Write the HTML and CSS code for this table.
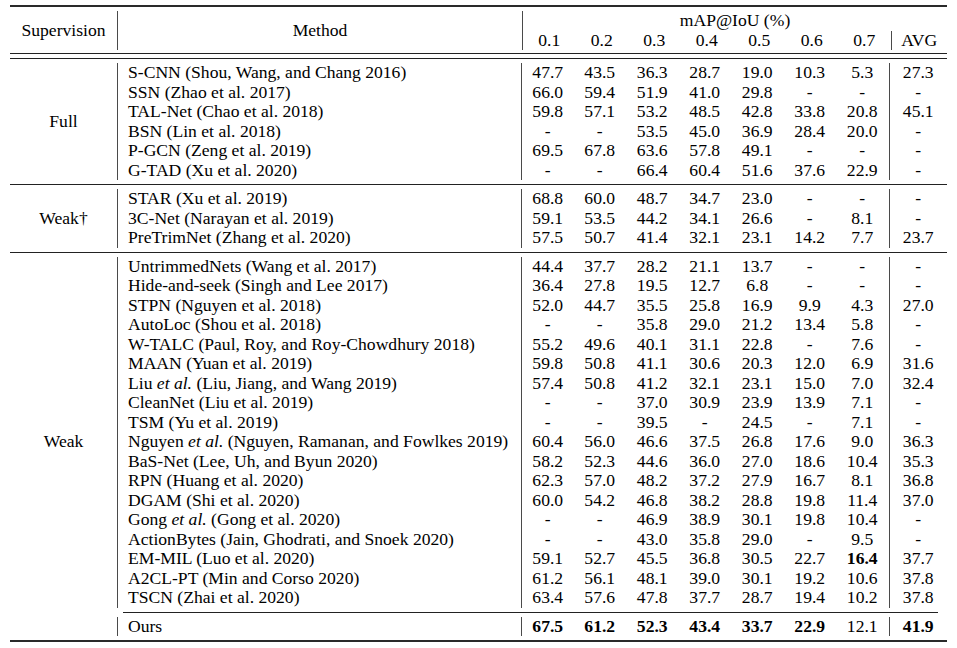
FILE: index.html
```html
<!DOCTYPE html>
<html>
<head>
<meta charset="utf-8">
<link rel="stylesheet" href="styles.css">
</head>
<body>
<div class="tbl">
  <div class="rule thick"></div>
  <div class="block head">
    <div class="sup">Supervision</div>
    <div class="hmethod">Method</div>
    <div class="hmap">
      <div class="htitle">mAP@IoU (%)</div>
      <div class="row hrow">
        <div class="n first">0.1</div><div class="n">0.2</div><div class="n">0.3</div><div class="n">0.4</div><div class="n">0.5</div><div class="n">0.6</div><div class="n">0.7</div><div class="avg">AVG</div>
      </div>
    </div>
  </div>
  <div class="rule"></div>
  <div class="gap4"></div>
  <div class="rule"></div>

  <div class="block">
    <div class="sup">Full</div>
    <div class="rows">
      <div class="row"><div class="m">S-CNN (Shou, Wang, and Chang 2016)</div><div class="n first">47.7</div><div class="n">43.5</div><div class="n">36.3</div><div class="n">28.7</div><div class="n">19.0</div><div class="n">10.3</div><div class="n">5.3</div><div class="avg">27.3</div></div>
      <div class="row"><div class="m">SSN (Zhao et al. 2017)</div><div class="n first">66.0</div><div class="n">59.4</div><div class="n">51.9</div><div class="n">41.0</div><div class="n">29.8</div><div class="n">-</div><div class="n">-</div><div class="avg">-</div></div>
      <div class="row"><div class="m">TAL-Net (Chao et al. 2018)</div><div class="n first">59.8</div><div class="n">57.1</div><div class="n">53.2</div><div class="n">48.5</div><div class="n">42.8</div><div class="n">33.8</div><div class="n">20.8</div><div class="avg">45.1</div></div>
      <div class="row"><div class="m">BSN (Lin et al. 2018)</div><div class="n first">-</div><div class="n">-</div><div class="n">53.5</div><div class="n">45.0</div><div class="n">36.9</div><div class="n">28.4</div><div class="n">20.0</div><div class="avg">-</div></div>
      <div class="row"><div class="m">P-GCN (Zeng et al. 2019)</div><div class="n first">69.5</div><div class="n">67.8</div><div class="n">63.6</div><div class="n">57.8</div><div class="n">49.1</div><div class="n">-</div><div class="n">-</div><div class="avg">-</div></div>
      <div class="row"><div class="m">G-TAD (Xu et al. 2020)</div><div class="n first">-</div><div class="n">-</div><div class="n">66.4</div><div class="n">60.4</div><div class="n">51.6</div><div class="n">37.6</div><div class="n">22.9</div><div class="avg">-</div></div>
    </div>
  </div>
  <div class="rule"></div>

  <div class="block">
    <div class="sup">Weak†</div>
    <div class="rows">
      <div class="row"><div class="m">STAR (Xu et al. 2019)</div><div class="n first">68.8</div><div class="n">60.0</div><div class="n">48.7</div><div class="n">34.7</div><div class="n">23.0</div><div class="n">-</div><div class="n">-</div><div class="avg">-</div></div>
      <div class="row"><div class="m">3C-Net (Narayan et al. 2019)</div><div class="n first">59.1</div><div class="n">53.5</div><div class="n">44.2</div><div class="n">34.1</div><div class="n">26.6</div><div class="n">-</div><div class="n">8.1</div><div class="avg">-</div></div>
      <div class="row"><div class="m">PreTrimNet (Zhang et al. 2020)</div><div class="n first">57.5</div><div class="n">50.7</div><div class="n">41.4</div><div class="n">32.1</div><div class="n">23.1</div><div class="n">14.2</div><div class="n">7.7</div><div class="avg">23.7</div></div>
    </div>
  </div>
  <div class="rule"></div>

  <div class="block">
    <div class="sup low">Weak</div>
    <div class="rows">
      <div class="row"><div class="m">UntrimmedNets (Wang et al. 2017)</div><div class="n first">44.4</div><div class="n">37.7</div><div class="n">28.2</div><div class="n">21.1</div><div class="n">13.7</div><div class="n">-</div><div class="n">-</div><div class="avg">-</div></div>
      <div class="row"><div class="m">Hide-and-seek (Singh and Lee 2017)</div><div class="n first">36.4</div><div class="n">27.8</div><div class="n">19.5</div><div class="n">12.7</div><div class="n">6.8</div><div class="n">-</div><div class="n">-</div><div class="avg">-</div></div>
      <div class="row"><div class="m">STPN (Nguyen et al. 2018)</div><div class="n first">52.0</div><div class="n">44.7</div><div class="n">35.5</div><div class="n">25.8</div><div class="n">16.9</div><div class="n">9.9</div><div class="n">4.3</div><div class="avg">27.0</div></div>
      <div class="row"><div class="m">AutoLoc (Shou et al. 2018)</div><div class="n first">-</div><div class="n">-</div><div class="n">35.8</div><div class="n">29.0</div><div class="n">21.2</div><div class="n">13.4</div><div class="n">5.8</div><div class="avg">-</div></div>
      <div class="row"><div class="m">W-TALC (Paul, Roy, and Roy-Chowdhury 2018)</div><div class="n first">55.2</div><div class="n">49.6</div><div class="n">40.1</div><div class="n">31.1</div><div class="n">22.8</div><div class="n">-</div><div class="n">7.6</div><div class="avg">-</div></div>
      <div class="row"><div class="m">MAAN (Yuan et al. 2019)</div><div class="n first">59.8</div><div class="n">50.8</div><div class="n">41.1</div><div class="n">30.6</div><div class="n">20.3</div><div class="n">12.0</div><div class="n">6.9</div><div class="avg">31.6</div></div>
      <div class="row"><div class="m">Liu <i>et al.</i> (Liu, Jiang, and Wang 2019)</div><div class="n first">57.4</div><div class="n">50.8</div><div class="n">41.2</div><div class="n">32.1</div><div class="n">23.1</div><div class="n">15.0</div><div class="n">7.0</div><div class="avg">32.4</div></div>
      <div class="row"><div class="m">CleanNet (Liu et al. 2019)</div><div class="n first">-</div><div class="n">-</div><div class="n">37.0</div><div class="n">30.9</div><div class="n">23.9</div><div class="n">13.9</div><div class="n">7.1</div><div class="avg">-</div></div>
      <div class="row"><div class="m">TSM (Yu et al. 2019)</div><div class="n first">-</div><div class="n">-</div><div class="n">39.5</div><div class="n">-</div><div class="n">24.5</div><div class="n">-</div><div class="n">7.1</div><div class="avg">-</div></div>
      <div class="row"><div class="m">Nguyen <i>et al.</i> (Nguyen, Ramanan, and Fowlkes 2019)</div><div class="n first">60.4</div><div class="n">56.0</div><div class="n">46.6</div><div class="n">37.5</div><div class="n">26.8</div><div class="n">17.6</div><div class="n">9.0</div><div class="avg">36.3</div></div>
      <div class="row"><div class="m">BaS-Net (Lee, Uh, and Byun 2020)</div><div class="n first">58.2</div><div class="n">52.3</div><div class="n">44.6</div><div class="n">36.0</div><div class="n">27.0</div><div class="n">18.6</div><div class="n">10.4</div><div class="avg">35.3</div></div>
      <div class="row"><div class="m">RPN (Huang et al. 2020)</div><div class="n first">62.3</div><div class="n">57.0</div><div class="n">48.2</div><div class="n">37.2</div><div class="n">27.9</div><div class="n">16.7</div><div class="n">8.1</div><div class="avg">36.8</div></div>
      <div class="row"><div class="m">DGAM (Shi et al. 2020)</div><div class="n first">60.0</div><div class="n">54.2</div><div class="n">46.8</div><div class="n">38.2</div><div class="n">28.8</div><div class="n">19.8</div><div class="n">11.4</div><div class="avg">37.0</div></div>
      <div class="row"><div class="m">Gong <i>et al.</i> (Gong et al. 2020)</div><div class="n first">-</div><div class="n">-</div><div class="n">46.9</div><div class="n">38.9</div><div class="n">30.1</div><div class="n">19.8</div><div class="n">10.4</div><div class="avg">-</div></div>
      <div class="row"><div class="m">ActionBytes (Jain, Ghodrati, and Snoek 2020)</div><div class="n first">-</div><div class="n">-</div><div class="n">43.0</div><div class="n">35.8</div><div class="n">29.0</div><div class="n">-</div><div class="n">9.5</div><div class="avg">-</div></div>
      <div class="row"><div class="m">EM-MIL (Luo et al. 2020)</div><div class="n first">59.1</div><div class="n">52.7</div><div class="n">45.5</div><div class="n">36.8</div><div class="n">30.5</div><div class="n">22.7</div><div class="n"><b>16.4</b></div><div class="avg">37.7</div></div>
      <div class="row"><div class="m">A2CL-PT (Min and Corso 2020)</div><div class="n first">61.2</div><div class="n">56.1</div><div class="n">48.1</div><div class="n">39.0</div><div class="n">30.1</div><div class="n">19.2</div><div class="n">10.6</div><div class="avg">37.8</div></div>
      <div class="row"><div class="m">TSCN (Zhai et al. 2020)</div><div class="n first">63.4</div><div class="n">57.6</div><div class="n">47.8</div><div class="n">37.7</div><div class="n">28.7</div><div class="n">19.4</div><div class="n">10.2</div><div class="avg">37.8</div></div>
    </div>
  </div>
  <div class="rule partial"></div>

  <div class="block">
    <div class="sup"></div>
    <div class="rows">
      <div class="row"><div class="m">Ours</div><div class="n first"><b>67.5</b></div><div class="n"><b>61.2</b></div><div class="n"><b>52.3</b></div><div class="n"><b>43.4</b></div><div class="n"><b>33.7</b></div><div class="n"><b>22.9</b></div><div class="n">12.1</div><div class="avg"><b>41.9</b></div></div>
    </div>
  </div>
  <div class="rule thick"></div>
</div>
</body>
</html>
```
FILE: styles.css
```css
html, body {
  margin: 0;
  padding: 0;
  background: #ffffff;
}

body {
  font-family: "Liberation Serif", "Times New Roman", serif;
  font-size: 17.6px;
  color: #000000;
}

.tbl {
  width: 937px;
  margin: 5px 0 0 10px;
}

.rule {
  height: 1px;
  background: #222222;
}

.rule.thick {
  height: 2px;
  background: #2a2a2a;
}

.rule.partial {
  margin: 0 9px 0 113px;
}

.gap4 {
  height: 4px;
}

.block {
  display: flex;
  padding: 4px 0;
}

.sup {
  width: 107px;
  flex: none;
  display: flex;
  align-items: center;
  justify-content: center;
}

.sup.low {
  padding-top: 19.5px;
  box-sizing: border-box;
}

.rows {
  flex: 1;
}

.row {
  display: grid;
  grid-template-columns: 404px repeat(7, 52.5px) 1fr;
  height: 19.5px;
  line-height: 19.5px;
  white-space: nowrap;
}

.m {
  border-left: 1px solid #4a4a4a;
  padding-left: 10px;
}

.n {
  text-align: center;
}

.n.first {
  border-left: 1px solid #4a4a4a;
}

.avg {
  border-left: 1px solid #4a4a4a;
  text-align: center;
}

b {
  font-weight: bold;
}

/* header */
.head {
  height: 39px;
  padding-bottom: 3px;
}

.hmethod {
  width: 404px;
  flex: none;
  border-left: 1px solid #4a4a4a;
  display: flex;
  align-items: center;
  justify-content: center;
}

.hmap {
  flex: 1;
  border-left: 1px solid #4a4a4a;
}

.htitle {
  height: 19.5px;
  line-height: 19.5px;
  text-align: center;
}

.hrow {
  grid-template-columns: repeat(7, 52.5px) 1fr;
}

.hrow .n.first {
  border-left: none;
}
```
